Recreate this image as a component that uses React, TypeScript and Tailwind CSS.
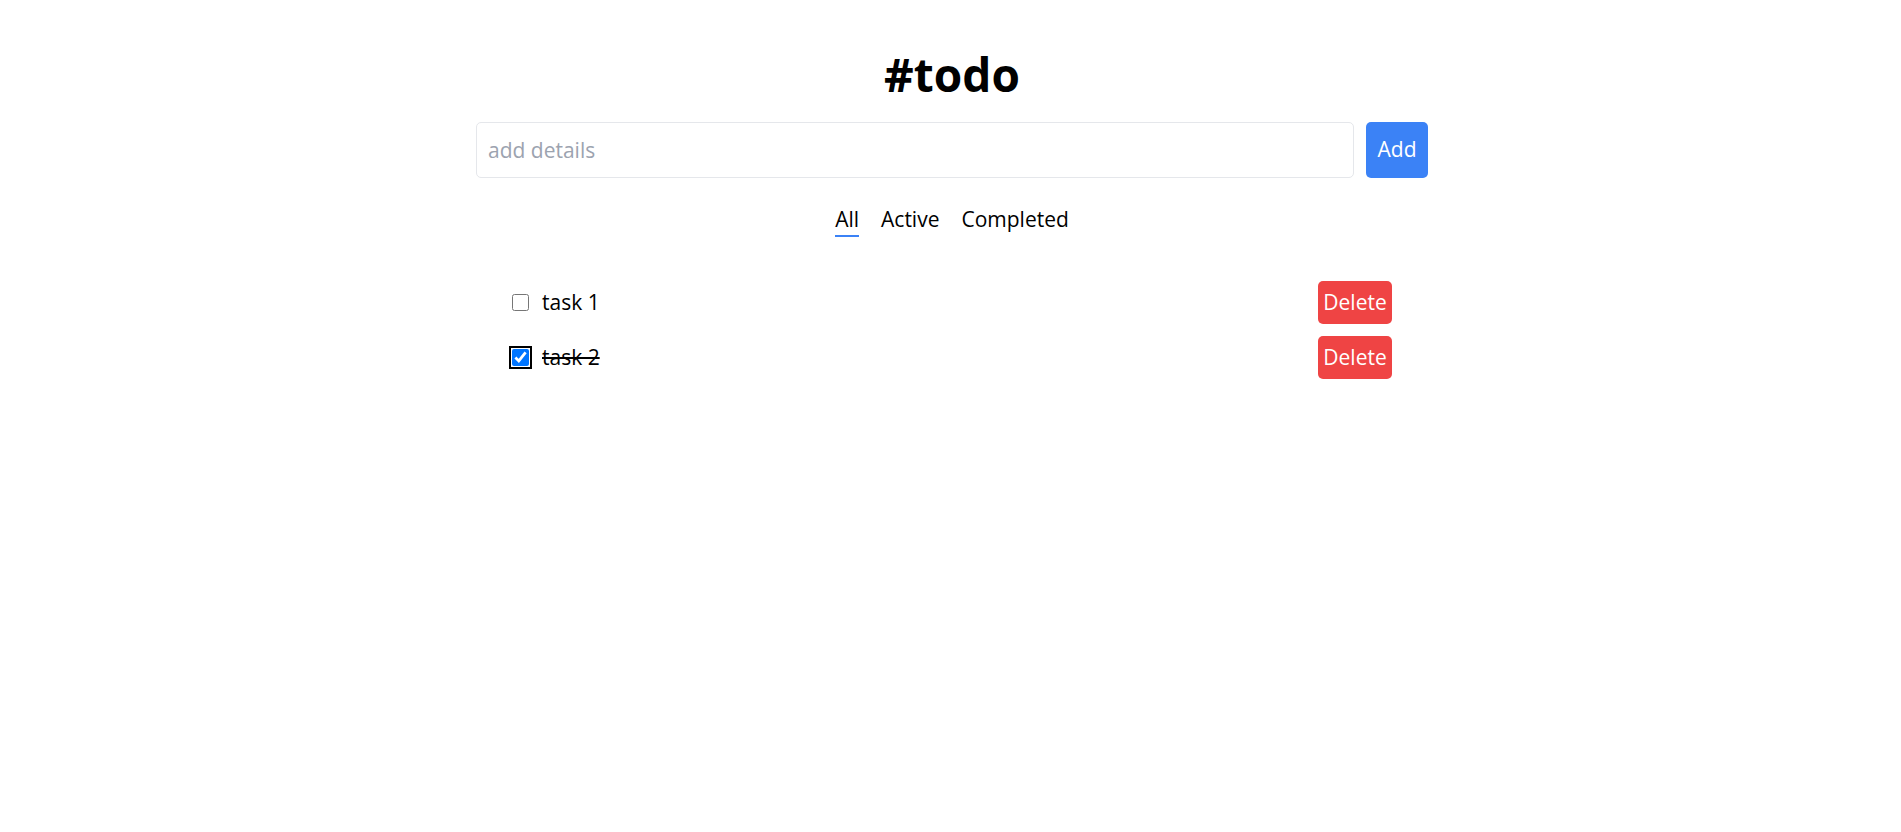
import React, { useState } from 'react';

type Filter = 'All' | 'Active' | 'Completed';

interface Task {
  id: number;
  text: string;
  done: boolean;
}

const App: React.FC = () => {
  const [tasks, setTasks] = useState<Task[]>([
    { id: 1, text: 'task 1', done: false },
    { id: 2, text: 'task 2', done: true },
  ]);
  const [filter, setFilter] = useState<Filter>('All');
  const [value, setValue] = useState('');

  const visible = tasks.filter((t) =>
    filter === 'All' ? true : filter === 'Active' ? !t.done : t.done
  );

  const addTask = () => {
    if (!value.trim()) return;
    setTasks([...tasks, { id: Date.now(), text: value.trim(), done: false }]);
    setValue('');
  };

  return (
    <div
      className="min-h-screen bg-white text-black"
      style={{ fontFamily: '"Open Sans", "Noto Sans", sans-serif' }}
    >
      <div className="mx-auto w-[955px] pl-[3px] pt-[48px]">
        <h1 className="text-center text-[46px] font-bold leading-[52px]">#todo</h1>

        <div className="mt-[22px] flex gap-[12px]">
          <input
            value={value}
            onChange={(e) => setValue(e.target.value)}
            placeholder="add details"
            className="h-[56px] flex-1 rounded-[5px] border border-[#e5e7eb] px-[11px] text-[21px] placeholder:text-[#9ca3af] focus:outline-none"
          />
          <button
            onClick={addTask}
            className="h-[56px] w-[62px] rounded-[5px] bg-[#3b82f6] text-[21px] text-white"
          >
            Add
          </button>
        </div>

        <div className="mt-[26px] flex justify-center gap-[22px] text-[21px]">
          {(['All', 'Active', 'Completed'] as Filter[]).map((f) => (
            <button
              key={f}
              onClick={() => setFilter(f)}
              className={`leading-[31px] border-b-[2px] ${
                filter === f ? 'border-[#3b82f6]' : 'border-transparent'
              }`}
            >
              {f}
            </button>
          ))}
        </div>

        <ul className="mt-[44px] flex flex-col gap-[12px] px-[36px]">
          {visible.map((t) => (
            <li key={t.id} className="flex items-center justify-between">
              <label className="flex items-center gap-[13px] text-[21px]">
                <input
                  type="checkbox"
                  checked={t.done}
                  onChange={() =>
                    setTasks(tasks.map((x) => (x.id === t.id ? { ...x, done: !x.done } : x)))
                  }
                  className={`h-[17px] w-[17px] ${
                    t.done ? 'rounded-[3px] outline-2 outline-offset-1 outline-black' : ''
                  }`}
                />
                <span className={t.done ? 'line-through' : ''}>{t.text}</span>
              </label>
              <button
                onClick={() => setTasks(tasks.filter((x) => x.id !== t.id))}
                className="h-[43px] w-[74px] rounded-[5px] bg-[#ef4444] text-[21px] text-white"
              >
                Delete
              </button>
            </li>
          ))}
        </ul>
      </div>
    </div>
  );
};

export default App;
